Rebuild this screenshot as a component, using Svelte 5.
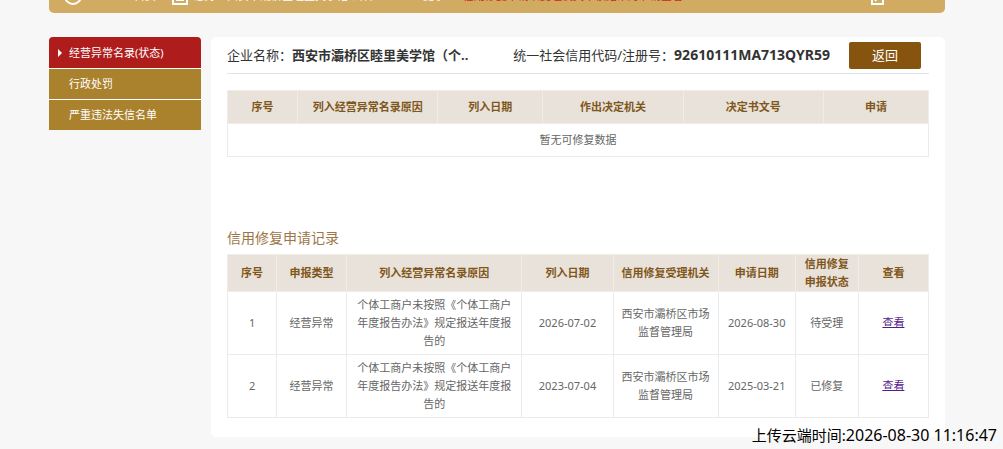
<script>
  const menu = ['经营异常名录(状态)', '行政处罚', '严重违法失信名单'];
  const pending = ['序号', '列入经营异常名录原因', '列入日期', '作出决定机关', '决定书文号', '申请'];
  const pendingWidths = [10, 20, 15, 20, 20, 15];
  const heads = ['序号', '申报类型', '列入经营异常名录原因', '列入日期', '信用修复受理机关', '申请日期', '信用修复申报状态', '查看'];
  const widths = [7, 10, 25, 13, 15, 11, 9, 10];
  const reason = '个体工商户未按照《个体工商户年度报告办法》规定报送年度报告的';
  const office = '西安市灞桥区市场监督管理局';
  const records = [
    ['1', '经营异常', reason, '2026-07-02', office, '2026-08-30', '待受理'],
    ['2', '经营异常', reason, '2023-07-04', office, '2025-03-21', '已修复']
  ];
</script>

<div class="page">
  <header>
    <svg class="ring" width="18" height="18" viewBox="0 0 18 18"><circle cx="9" cy="9" r="8" /></svg>
    <span class="first">首页</span>
    <svg class="box" width="16" height="16" viewBox="0 0 16 16"><path d="M1 1H15V15H1Z" /><path class="thin" d="M4 5H12 M4 8H12 M4 11.5H12" /></svg>
    <span class="name">您好：西安市灞桥区睦里美学馆个体户</span>
    <span class="hint">提示</span>
    <span class="notice">信用修复申请以受理机关审核结果为准请查看</span>
    <svg class="exit" width="13" height="14" viewBox="0 0 13 14"><path d="M5 3H1V13H12V8 M4 10L11 2" /></svg>
  </header>

  <div class="body">
    <nav>
      {#each menu as item, i}
        <a href="#top" class:active={i === 0}>{item}</a>
      {/each}
    </nav>

    <main>
      <div class="company">
        <div class="title">企业名称：<b>西安市灞桥区睦里美学馆（个..</b></div>
        <div class="code">统一社会信用代码/注册号：<b class="number">92610111MA713QYR59</b></div>
        <button type="button">返回</button>
      </div>

      <table class="pending">
        <colgroup>{#each pendingWidths as w}<col style="width: {w}%" />{/each}</colgroup>
        <thead><tr>{#each pending as h}<th>{h}</th>{/each}</tr></thead>
        <tbody><tr><td colspan="6">暂无可修复数据</td></tr></tbody>
      </table>

      <h2>信用修复申请记录</h2>
      <table class="records">
        <colgroup>{#each widths as w}<col style="width: {w}%" />{/each}</colgroup>
        <thead><tr>{#each heads as h}<th>{h}</th>{/each}</tr></thead>
        <tbody>
          {#each records as row}
            <tr>
              {#each row as cell}<td>{cell}</td>{/each}
              <td><a href="#top">查看</a></td>
            </tr>
          {/each}
        </tbody>
      </table>
    </main>
  </div>

  <div class="stamp">上传云端时间:<span>2026-08-30 11:16:47</span></div>
</div>

<style>
  :global(body) {
    background: #f7f7f7;
    overflow: hidden;
  }
  .page {
    position: relative;
    box-sizing: border-box;
    padding: 0 58px 12px 49px;
    font-family: "Noto Sans", "Noto Sans CJK SC", sans-serif;
    font-size: 11px;
    line-height: 18px;
    color: #666;
  }
  header {
    display: flex;
    align-items: flex-end;
    box-sizing: border-box;
    height: 48px;
    margin-top: -35px;
    padding: 0 61px 8px 15px;
    border-radius: 5px;
    background: #d0ab61;
    color: #fff;
    white-space: nowrap;
  }
  header span { line-height: 18px; }
  header svg { flex: none; fill: none; stroke: #fff; stroke-width: 2; }
  header .thin { stroke-width: 1; }
  .first { margin-left: 52px; }
  .box { margin-left: 16px; }
  .name { margin-left: 6px; }
  .hint { margin-left: 42px; }
  .notice { margin-left: 18px; color: #d32610; }
  .exit { margin-left: auto; }
  .body {
    display: flex;
    align-items: flex-start;
    gap: 10px;
    margin-top: 24px;
  }
  nav {
    display: flex;
    flex-direction: column;
    flex: 0 0 152px;
    border-radius: 4px 4px 0 0;
    overflow: hidden;
  }
  nav a {
    display: flex;
    align-items: center;
    box-sizing: border-box;
    height: 31px;
    padding-left: 20px;
    background: #aa812c;
    color: #fff;
    text-decoration: none;
  }
  nav a + a { border-top: 1px solid #fff; }
  nav a.active {
    padding-left: 9px;
    background: #af1c1c;
  }
  nav a.active::before {
    content: "";
    margin-right: 7px;
    border: 4px solid transparent;
    border-left-color: #fff;
    border-right: 0;
  }
  main {
    flex: 1;
    min-width: 0;
    padding: 0 16px 19px;
    border-radius: 5px;
    background: #fff;
  }
  .company {
    display: flex;
    align-items: center;
    box-sizing: border-box;
    height: 37px;
    padding-right: 8px;
    border-bottom: 1px solid #e3e3e3;
    font-size: 13px;
    color: #333;
    white-space: nowrap;
  }
  .title { flex: 1; }
  .code { margin-right: 19px; }
  .number { font-size: 14px; }
  button {
    width: 72px;
    height: 27px;
    padding: 0;
    border: 0;
    border-radius: 2px;
    background: #86540f;
    color: #fff;
    font: inherit;
  }
  table {
    width: 100%;
    table-layout: fixed;
    border-collapse: collapse;
    text-align: center;
  }
  th, td {
    padding: 4px 8px;
    border: 1px solid #ebebeb;
  }
  th {
    padding: 0 6px;
    background: #e8e2db;
    border-color: #f0ece8;
    color: #80561a;
    font-weight: 700;
  }
  .pending { margin-top: 16px; }
  .pending th, .pending td { height: 32px; padding: 0; }
  h2 {
    margin: 71px 0 6px;
    font-size: 14px;
    line-height: 20px;
    font-weight: 400;
    color: #9b7647;
  }
  td a { color: #551a8b; text-underline-offset: 0; }
  .stamp {
    position: absolute;
    right: 6px;
    bottom: 5px;
    font-size: 15px;
    line-height: 18px;
    color: #000;
  }
  .stamp span { font-size: 16px; }
</style>
